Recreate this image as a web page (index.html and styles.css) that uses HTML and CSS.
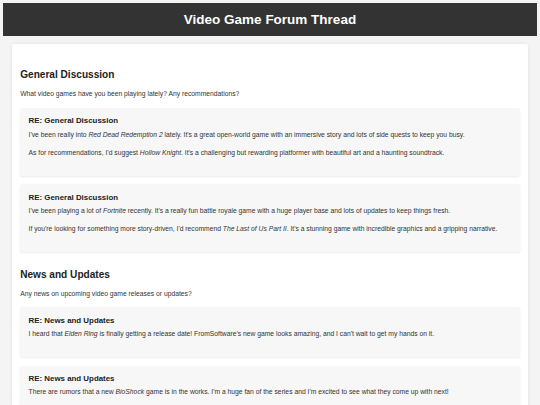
FILE: index.html
```html
<!DOCTYPE html>
<html lang="en">
<head>
    <meta charset="UTF-8">
    <meta name="viewport" content="width=device-width, initial-scale=1.0">
    <title>Video Game Forum Thread</title>
    <link rel="stylesheet" href="styles.css">
</head>
<body>
    <header class="site-header">
        <h1>Video Game Forum Thread</h1>
    </header>

    <main class="forum">
        <section class="topic">
            <h2>General Discussion</h2>
            <p class="topic-desc">What video games have you been playing lately? Any recommendations?</p>

            <div class="reply">
                <h3>RE: General Discussion</h3>
                <p>I've been really into <em>Red Dead Redemption 2</em> lately. It's a great open-world game with an immersive story and lots of side quests to keep you busy.</p>
                <p>As for recommendations, I'd suggest <em>Hollow Knight</em>. It's a challenging but rewarding platformer with beautiful art and a haunting soundtrack.</p>
            </div>

            <div class="reply">
                <h3>RE: General Discussion</h3>
                <p>I've been playing a lot of <em>Fortnite</em> recently. It's a really fun battle royale game with a huge player base and lots of updates to keep things fresh.</p>
                <p>If you're looking for something more story-driven, I'd recommend <em>The Last of Us Part II</em>. It's a stunning game with incredible graphics and a gripping narrative.</p>
            </div>
        </section>

        <section class="topic">
            <h2>News and Updates</h2>
            <p class="topic-desc">Any news on upcoming video game releases or updates?</p>

            <div class="reply">
                <h3>RE: News and Updates</h3>
                <p>I heard that <em>Elden Ring</em> is finally getting a release date! FromSoftware's new game looks amazing, and I can't wait to get my hands on it.</p>
            </div>

            <div class="reply">
                <h3>RE: News and Updates</h3>
                <p>There are rumors that a new <em>BioShock</em> game is in the works. I'm a huge fan of the series and I'm excited to see what they come up with next!</p>
            </div>
        </section>
    </main>
</body>
</html>
```

FILE: styles.css
```css
body {
    font-family: "Liberation Sans", Arial, sans-serif;
    background-color: #f4f4f4;
    color: #333;
    margin: 3.4px;
    font-size: 6.75px;
    line-height: 1.6;
}

.site-header {
    background-color: #333;
    color: #fff;
    padding: 8.4px;
    text-align: center;
}

.site-header h1 {
    margin: 0;
    font-size: 13.5px;
    line-height: 1.15;
}

.forum {
    margin: 8.4px;
    padding: 8.4px;
    background: #fff;
    border-radius: 2px;
    box-shadow: 0 0 4px rgba(0, 0, 0, 0.08);
}

.topic {
    padding-top: 8.4px;
}

.topic h2 {
    margin: 8.4px 0;
    font-size: 10.1px;
    line-height: 1.15;
    color: #222;
}

.topic-desc {
    margin: 0 0 8px;
}

.reply {
    background: #f7f7f7;
    border-radius: 2px;
    padding: 8.4px 8.4px 9.5px;
    margin-bottom: 8.8px;
    box-shadow: 0 1px 2px rgba(0, 0, 0, 0.08);
}

.reply:last-child {
    margin-bottom: 0;
}

.reply h3 {
    margin: 0 0 4.2px;
    font-size: 7.9px;
    line-height: 1.15;
    color: #222;
}

.reply p {
    margin: 0 0 7.4px;
}
```
